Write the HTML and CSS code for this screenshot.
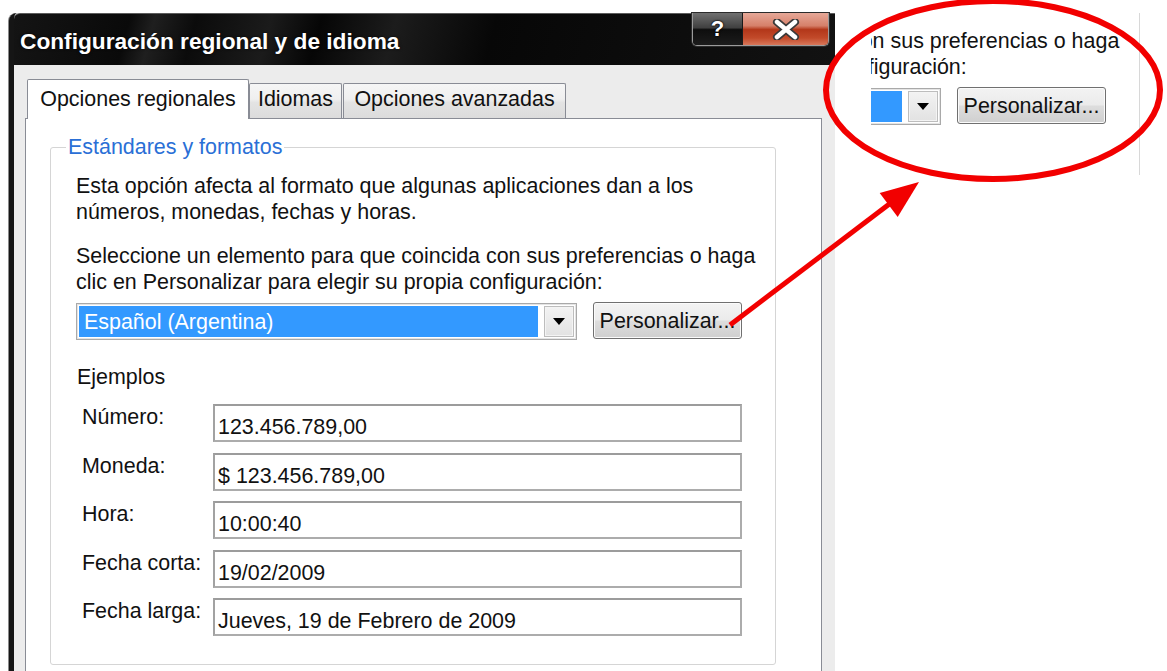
FILE: index.html
```html
<!DOCTYPE html>
<html lang="es">
<head>
<meta charset="utf-8">
<title>Configuración regional y de idioma</title>
<link rel="stylesheet" href="styles.css">
</head>
<body>
<div class="page">
  <div class="window">
    <div class="titlebar">
      <span class="title">Configuración regional y de idioma</span>
      <div class="caption-buttons">
        <span class="cap-btn help">?</span>
        <span class="cap-btn close">
          <svg width="28" height="21" viewBox="0 0 28 21">
            <path d="M5 3 L23 18 M23 3 L5 18" stroke="#3a3a3a" stroke-width="8" stroke-linecap="round" fill="none"/>
            <path d="M5 3 L23 18 M23 3 L5 18" stroke="#ffffff" stroke-width="4.5" stroke-linecap="round" fill="none"/>
          </svg>
        </span>
      </div>
    </div>
    <div class="client">
      <div class="tabs">
        <span class="tab tab-active tab-regional">Opciones regionales</span>
        <span class="tab tab-idiomas">Idiomas</span>
        <span class="tab tab-avanzadas">Opciones avanzadas</span>
      </div>
      <div class="tab-page">
        <fieldset class="group">
          <legend class="group-title">Estándares y formatos</legend>
          <p class="note">Esta opción afecta al formato que algunas aplicaciones dan a los<br>números, monedas, fechas y horas.</p>
          <div class="picker">
            <p class="prompt">Seleccione un elemento para que coincida con sus preferencias o haga<br>clic en Personalizar para elegir su propia configuración:</p>
            <div class="picker-row">
              <div class="combo">
                <span class="combo-value">Español (Argentina)</span>
                <span class="combo-btn"><span class="arrow"></span></span>
              </div>
              <span class="button">Personalizar...</span>
            </div>
          </div>
          <div class="examples-title">Ejemplos</div>
          <div class="examples">
            <span class="ex-label">Número:</span><span class="ex-field">123.456.789,00</span>
            <span class="ex-label">Moneda:</span><span class="ex-field">$ 123.456.789,00</span>
            <span class="ex-label">Hora:</span><span class="ex-field">10:00:40</span>
            <span class="ex-label">Fecha corta:</span><span class="ex-field">19/02/2009</span>
            <span class="ex-label">Fecha larga:</span><span class="ex-field">Jueves, 19 de Febrero de 2009</span>
          </div>
        </fieldset>
      </div>
    </div>
  </div>

  <div class="callout">
    <div class="callout-inner picker">
      <p class="prompt">Seleccione un elemento para que coincida con sus preferencias o haga<br>clic en Personalizar para elegir su propia configuración:</p>
      <div class="picker-row">
        <div class="combo">
          <span class="combo-value">Español (Argentina)</span>
          <span class="combo-btn"><span class="arrow"></span></span>
        </div>
        <span class="button">Personalizar...</span>
      </div>
    </div>
  </div>

  <svg class="marks" width="1167" height="671" viewBox="0 0 1167 671">
    <ellipse cx="993" cy="90" rx="167" ry="89" fill="none" stroke="#f20000" stroke-width="6"/>
    <line x1="730" y1="325" x2="892" y2="202" stroke="#f20000" stroke-width="5"/>
    <polygon points="919,182 897.7,216.9 879.7,192.9" fill="#f20000"/>
  </svg>
</div>
</body>
</html>
```

FILE: styles.css
```css
* {
  box-sizing: border-box;
}

body {
  margin: 0;
  height: 671px;
  overflow: hidden;
  background: #ffffff;
  font-family: "Liberation Sans", Arial, sans-serif;
  font-size: 21.45px;
  line-height: 26px;
  color: #111111;
}

.page {
  position: relative;
  display: flex;
  align-items: flex-start;
  height: 671px;
}

/* ---- dialog window ---- */
.window {
  margin: 13px 0 0 9px;
  width: 826px;
  height: 700px;
  display: flex;
  flex-direction: column;
  background: #ececec;
  border-left: 5px solid #151515;
  border-top-left-radius: 8px;
  box-shadow: -1px 0 0 #8a8a8a;
}

.titlebar {
  height: 52px;
  display: flex;
  justify-content: space-between;
  align-items: flex-start;
  padding: 0 6px 0 6px;
  border-top: 1px solid #5c5c5c;
  border-top-left-radius: 6px;
  background:
    linear-gradient(105deg, #141414 0%, #0a0a0a 14%, #1f1f1f 17%, #0b0b0b 22%, #1b1b1b 31%, #060606 37%, #1c1c1c 46%, #070707 58%, #121212 100%);
}

.title {
  padding-top: 2px;
  line-height: 51px;
  font-size: 22.7px;
  font-weight: bold;
  color: #ffffff;
  text-shadow: 0 0 3px rgba(0, 0, 0, 0.9);
}

.caption-buttons {
  display: flex;
  margin-top: -1px;
  height: 33px;
  border: 1px solid #9b9b9b;
  border-top: none;
  border-radius: 0 0 5px 5px;
  overflow: hidden;
  box-shadow: 0 0 0 1px #2b2b2b;
}

.cap-btn {
  display: flex;
  align-items: center;
  justify-content: center;
}

.help {
  width: 50px;
  border-right: 1px solid #1a1a1a;
  background: linear-gradient(#707070 0%, #404040 46%, #0e0e0e 52%, #1c1c1c 100%);
  color: #ffffff;
  font-weight: bold;
  font-size: 22px;
  text-shadow: 0 0 2px #000, 0 0 2px #000;
}

.close {
  width: 85px;
  background: linear-gradient(#e6a898 0%, #d6806a 40%, #b3371a 52%, #c24a2a 78%, #d8775a 100%);
}

.client {
  flex: 1;
  display: flex;
  flex-direction: column;
  padding: 14px 13px 0 11px;
}

/* ---- tabs ---- */
.tabs {
  display: flex;
  align-items: flex-end;
  padding-left: 2px;
  margin-bottom: -1px;
  position: relative;
  z-index: 1;
}

.tab {
  text-align: center;
  white-space: nowrap;
  height: 35px;
  margin-bottom: 1px;
  padding-top: 2px;
  border: 1px solid #898c95;
  border-bottom: none;
  border-radius: 2px 2px 0 0;
  background: linear-gradient(#f6f6f6 0%, #efefef 45%, #e3e3e3 55%, #dcdcdc 100%);
}

.tab-active {
  height: 40px;
  margin-bottom: 0;
  padding-top: 6px;
  background: #ffffff;
}

.tab-regional { width: 222px; }
.tab-idiomas { width: 93px; }
.tab-avanzadas { width: 223px; margin-left: 1px; }

.tab-page {
  flex: 1;
  border: 1px solid #898c95;
  background: #ffffff;
  padding: 15px 45px 0 24px;
}

/* ---- group box ---- */
.group {
  margin: 0;
  min-width: 0;
  border: 1px solid #d5d5d5;
  border-radius: 3px;
  padding: 13px 33px 28px 25px;
}

.group-title {
  margin-left: -10px;
  padding: 0 2px;
  color: #2a6fd6;
}

.note,
.prompt {
  margin: 0 0 18px;
  white-space: nowrap;
}

.prompt {
  margin-bottom: 8px;
}

.picker-row {
  display: flex;
  align-items: flex-start;
  gap: 16px;
}

.combo {
  width: 501px;
  height: 37px;
  display: flex;
  padding: 2px;
  border: 1px solid #a9a9a9;
  box-shadow: inset 0 0 0 1px #e4e4e4;
}

.combo-value {
  flex: 1;
  display: flex;
  align-items: center;
  padding-left: 5px;
  background: #3399ff;
  color: #ffffff;
  white-space: nowrap;
}

.combo-btn {
  width: 30px;
  margin-left: 6px;
  display: flex;
  align-items: center;
  justify-content: center;
  border: 1px solid #bdbdbd;
  box-shadow: inset 0 0 0 1px #f4f4f4;
  background: linear-gradient(#f3f3f3, #e2e2e2);
}

.arrow {
  width: 0;
  height: 0;
  border-left: 6px solid transparent;
  border-right: 6px solid transparent;
  border-top: 7px solid #000000;
}

.button {
  width: 149px;
  height: 37px;
  margin-top: -1px;
  display: flex;
  align-items: center;
  justify-content: center;
  border: 1px solid #707070;
  border-radius: 3px;
  box-shadow: inset 0 0 0 1px #fbfbfb;
  background: linear-gradient(#f3f3f3 0%, #ebebeb 48%, #dddddd 52%, #cfcfcf 100%);
  white-space: nowrap;
}

.examples-title {
  margin: 24px 0 0 1px;
}

.examples {
  display: grid;
  grid-template-columns: 137px 529px;
  grid-auto-rows: 38px;
  row-gap: 10.5px;
  margin-top: 14px;
}

.ex-label {
  padding: 0 0 0 6px;
  white-space: nowrap;
}

.ex-field {
  padding: 8px 0 0 3px;
  border: 2px solid #acacac;
  border-top-color: #9c9c9c;
  border-left-color: #a2a2a2;
  white-space: nowrap;
}

/* ---- magnified callout ---- */
.callout {
  margin: 13px 0 0 36px;
  width: 269px;
  height: 162px;
  overflow: hidden;
  border-right: 1px solid #d8d8d8;
}

.callout-inner {
  margin-left: -431px;
  width: 666px;
  padding-top: 15px;
}

.marks {
  position: absolute;
  left: 0;
  top: 0;
  pointer-events: none;
}
```
